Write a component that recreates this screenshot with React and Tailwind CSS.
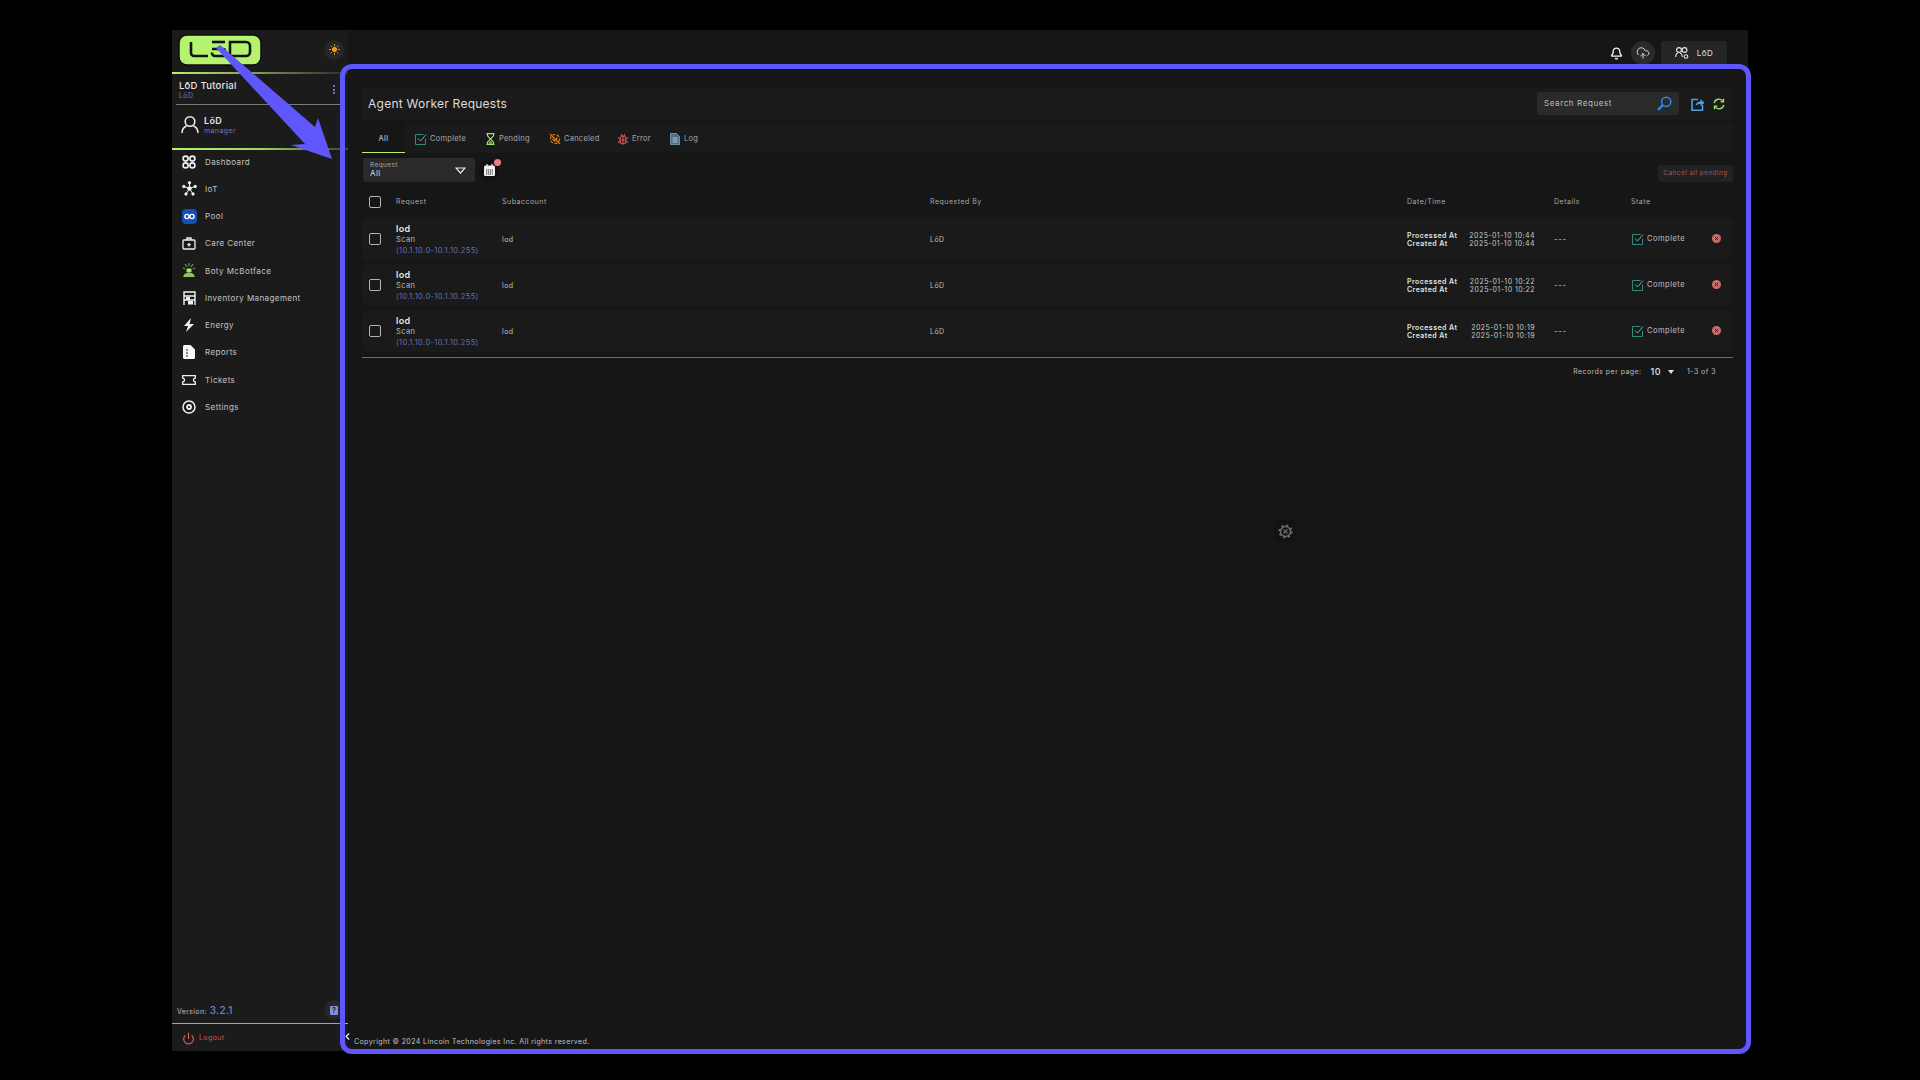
import { Bell, CloudUpload, Power, ChevronLeft } from "lucide-react";

const Logo = () => (
  <svg width="84" height="32" viewBox="0 0 84 32" className="block">
    <rect x="1" y="1" width="82" height="30" rx="8" fill="#b5f36f" stroke="#0d0d0d" strokeWidth="1.5" />
    <g fill="none" stroke="#10140c" strokeWidth="2.6">
      <path d="M13 8v11a3 3 0 0 0 3 3h14" />
      <path d="M34 8h13" />
      <path d="M34 15h11a2 2 0 0 1 2 2v5H37a3 3 0 0 1-3-3.500" />
      <path d="M52 8h16a4 4 0 0 1 4 4v6a4 4 0 0 1-4 4H52z" />
    </g>
  </svg>
);

const DashIcon = () => (
  <svg width="14" height="14" viewBox="0 0 14 14" fill="none" stroke="#f2f2f2" strokeWidth="1.6">
    <circle cx="3.6" cy="3.6" r="2.5" />
    <circle cx="10.4" cy="3.6" r="2.5" />
    <circle cx="3.6" cy="10.4" r="2.5" />
    <circle cx="10.4" cy="10.4" r="2.5" />
  </svg>
);

const IotIcon = () => (
  <svg width="15" height="15" viewBox="0 0 15 15" fill="#f2f2f2" stroke="#f2f2f2" strokeWidth="1">
    <path d="M7.5 7.5 7.5 2M7.5 7.5 2 5.5M7.5 7.5 13 5.5M7.5 7.5 4 13M7.5 7.5 11 13" fill="none" />
    <circle cx="7.5" cy="7.5" r="1.8" />
    <circle cx="7.5" cy="1.8" r="1.2" />
    <circle cx="1.8" cy="5.5" r="1.2" />
    <circle cx="13.2" cy="5.5" r="1.2" />
    <circle cx="4" cy="13" r="1.2" />
    <circle cx="11" cy="13" r="1.2" />
  </svg>
);

const PoolIcon = () => (
  <svg width="15" height="15" viewBox="0 0 15 15" fill="none">
    <rect width="15" height="15" rx="4" fill="#1450b8" />
    <circle cx="5" cy="7.5" r="2.1" stroke="#fff" strokeWidth="1.4" />
    <circle cx="10" cy="7.5" r="2.1" stroke="#fff" strokeWidth="1.4" />
  </svg>
);

const CareIcon = () => (
  <svg width="14" height="13" viewBox="0 0 14 13" fill="none" stroke="#f2f2f2" strokeWidth="1.3">
    <rect x="1" y="3" width="12" height="9" rx="1" />
    <path d="M5 3V1h4v2M7 6v3.4M5.3 7.7h3.4" />
  </svg>
);

const BotyIcon = () => (
  <svg width="14" height="15" viewBox="0 0 14 15" fill="#86c95a">
    <path d="M1 14l1.5-3 2-1h5l2 1 1.5 3z" />
    <rect x="4.5" y="5.5" width="5" height="4" rx="1" fill="#a7e07a" />
    <path d="M3 1l2 3M11 1 9 4M7 0v3M1 5l2 1M13 5l-2 1" stroke="#6fa84c" strokeWidth="1.1" fill="none" />
  </svg>
);

const InventoryIcon = () => (
  <svg width="13" height="14" viewBox="0 0 13 14" fill="none" stroke="#f2f2f2" strokeWidth="1.4">
    <path d="M1 14V1h11v13M1 5h11M1 9h11" />
    <rect x="5" y="10" width="5" height="3.5" fill="#f2f2f2" stroke="none" />
    <rect x="3" y="6" width="4" height="3" fill="#f2f2f2" stroke="none" />
  </svg>
);

const EnergyIcon = () => (
  <svg width="12" height="14" viewBox="0 0 12 14" fill="#f2f2f2">
    <path d="M8 0 1 8h4l-2 6 8-8H6.5z" />
  </svg>
);

const ReportsIcon = () => (
  <svg width="12" height="14" viewBox="0 0 12 14">
    <path d="M1.5 0H7.5L12 4.5V12.5A1.5 1.5 0 0 1 10.5 14H1.5A1.5 1.5 0 0 1 0 12.5V1.5A1.5 1.5 0 0 1 1.5 0z" fill="#f7f7f7" />
    <path d="M3 5h2M3 8h2M3 11h2" stroke="#222" strokeWidth="1" />
  </svg>
);

const TicketIcon = () => (
  <svg width="14" height="10" viewBox="0 0 14 10" fill="none" stroke="#f2f2f2" strokeWidth="1.3">
    <path d="M.7.7h12.6v2.5a1.8 1.8 0 0 0 0 3.6v2.5H.7V6.800a1.8 1.8 0 0 0 0-3.6z" />
  </svg>
);

const SettingsIcon = () => (
  <svg width="14" height="14" viewBox="0 0 14 14" fill="none" stroke="#f2f2f2">
    <circle cx="7" cy="7" r="6" strokeWidth="1.5" />
    <circle cx="7" cy="7" r="2" strokeWidth="1.8" />
  </svg>
);

const navItems = [
  ["Dashboard", <DashIcon />],
  ["IoT", <IotIcon />],
  ["Pool", <PoolIcon />],
  ["Care Center", <CareIcon />],
  ["Boty McBotface", <BotyIcon />],
  ["Inventory Management", <InventoryIcon />],
  ["Energy", <EnergyIcon />],
  ["Reports", <ReportsIcon />],
  ["Tickets", <TicketIcon />],
  ["Settings", <SettingsIcon />],
];

const CheckSquare = () => (
  <svg width="12" height="12" viewBox="0 0 12 12" fill="none" stroke="#2f8a7c" strokeWidth="1">
    <path d="M10.5 5.5v6H.5V1.500h8" />
    <path d="M3 5.5l2.5 2.5L11 1.5" stroke="#5cb8a6" />
  </svg>
);

const Hourglass = () => (
  <svg width="9" height="12" viewBox="0 0 9 12" fill="none" stroke="#9ee06a" strokeWidth="1.2">
    <path d="M.5.6h8M.5 11.4h8M1.5.6v2.2L4.5 6l-3 3.2v2.2M7.5.6v2.2L4.5 6l3 3.2v2.2" />
    <path d="M2.5 10.5 4.5 8l2 2.5z" fill="#9ee06a" stroke="none" />
  </svg>
);

const Canceled = () => (
  <svg width="12" height="12" viewBox="0 0 12 12" fill="none" stroke="#e07b1c" strokeWidth="1.2">
    <circle cx="6" cy="6" r="4.5" strokeDasharray="3 1.5" />
    <path d="M1 1l10 10M3.5 6l2 2 3-3.5" />
  </svg>
);

const Bug = () => (
  <svg width="12" height="12" viewBox="0 0 12 12" fill="none" stroke="#e05252" strokeWidth="1.1">
    <ellipse cx="6" cy="7" rx="3" ry="4" />
    <path d="M6 3v8M3 7h6M4 1l1 2M8 1 7 3M.8 4.500 3 5.500M11.2 4.500 9 5.500M.8 9.500 3 8.500M11.2 9.500 9 8.500" />
  </svg>
);

const LogIcon = () => (
  <svg width="10" height="12" viewBox="0 0 10 12" fill="#4f6f86" stroke="#7fa3bd" strokeWidth="0.8">
    <path d="M.5.5h6l3 3v8H.5z" />
    <path d="M2.5 5h5M2.5 7h5M2.5 9h5" stroke="#c7d8e4" />
  </svg>
);

const tabs = [
  ["Complete", <CheckSquare />, "w-[69px]"],
  ["Pending", <Hourglass />, "w-[65px]"],
  ["Canceled", <Canceled />, "w-[68px]"],
  ["Error", <Bug />, "w-[52px]"],
  ["Log", <LogIcon />, "w-[40px]"],
];

const rowData = [
  ["2025-01-10 10:44", "2025-01-10 10:44"],
  ["2025-01-10 10:22", "2025-01-10 10:22"],
  ["2025-01-10 10:19", "2025-01-10 10:19"],
];

const cols = "grid grid-cols-[34px_106px_428px_477px_147px_77px_76px_26px] items-center";

const Checkbox = () => (
  <div className="ml-[7px] w-[12px] h-[12px] rounded-[2px] border-[1.5px] border-[#b4b4b4]" />
);

const Sidebar = () => (
  <div className="w-[176px] shrink-0 bg-[#1b1b1b] flex flex-col relative">
    {/* logo */}
    <div className="h-[42px] flex items-center justify-between pl-[6px] pr-[4px] pb-[3px]">
      <Logo />
      <div className="w-[20px] h-[20px] rounded-full bg-[#262626] flex items-center justify-center">
        <svg width="11" height="11" viewBox="0 0 11 11" fill="#e99a22" stroke="#e99a22">
          <circle cx="5.5" cy="5.5" r="2.2" />
          <path d="M5.5 0v2M5.5 9v2M0 5.5h2M9 5.5h2M1.6 1.6l1.4 1.4M8 8l1.4 1.4M1.6 9.4 3 8M8 3l1.4-1.4" strokeWidth="0.9" />
        </svg>
      </div>
    </div>
    <div className="h-[2px] w-full bg-gradient-to-r from-[#b5f36f] via-[#7d9a55] to-[#2a2a2a]" />

    {/* account */}
    <div className="h-[30px] pl-[7px] pr-[13px] pt-[1px] flex items-center justify-between">
      <div>
        <div className="text-[9.5px] leading-[12px] font-medium tracking-[0.25px] text-[#e4e4e4]">LōD Tutorial</div>
        <div className="text-[7px] leading-[8px] tracking-[0.4px] text-[#6e78c8]">LōD</div>
      </div>
      <div className="flex flex-col gap-[1.5px]">
        <div className="w-[2px] h-[2px] rounded-full bg-[#8a93e0]" />
        <div className="w-[2px] h-[2px] rounded-full bg-[#8a93e0]" />
        <div className="w-[2px] h-[2px] rounded-full bg-[#8a93e0]" />
      </div>
    </div>
    <div className="ml-[4px] h-[1px] w-[166px] bg-[#7c7c7c]" />

    {/* user */}
    <div className="h-[43px] pl-[9px] pb-[4px] flex items-center gap-[5px]">
      <svg width="18" height="19" viewBox="0 0 18 19" fill="none" stroke="#f2f2f2" strokeWidth="1.5">
        <circle cx="9" cy="6.5" r="4.8" />
        <path d="M1 18c0-4 2-6 4.500-7M17 18c0-4-2-6-4.500-7" />
      </svg>
      <div>
        <div className="text-[9px] leading-[11px] font-semibold tracking-[0.3px] text-[#e4e4e4]">LōD</div>
        <div className="text-[7px] leading-[9px] tracking-[0.4px] text-[#6e78c8]">manager</div>
      </div>
    </div>
    <div className="h-[2px] w-full bg-gradient-to-r from-[#b5f36f] via-[#a3d565] to-[#3a4a2a]" />

    {/* nav */}
    <div className="-mt-[2px] flex flex-col">
      {navItems.map(([label, icon]) => (
        <div key={label} className="h-[27.25px] flex items-center">
          <div className="w-[33px] pl-[8px] pr-[7px] flex justify-center">{icon}</div>
          <span className="text-[8px] tracking-[0.42px] text-[#c4c4c4] whitespace-nowrap">{label}</span>
        </div>
      ))}
    </div>

    {/* bottom */}
    <div className="mt-auto">
      <div className="pl-[5px] pr-[4px] h-[24px] pb-[2px] flex items-center justify-between">
        <div className="flex items-baseline gap-[3px]">
          <span className="text-[7px] tracking-[0.35px] text-[#bdbdbd]">Version:</span>
          <span className="text-[10px] font-medium tracking-[0.3px] text-[#6f7fd6]">3.2.1</span>
        </div>
        <div className="w-[20px] h-[20px] rounded-full bg-[#262626] flex items-center justify-center">
          <div className="w-[8px] h-[9px] rounded-[1px] bg-[#7f8fe0] text-[7px] leading-[9px] text-center font-bold text-[#1b1b1b]">?</div>
        </div>
      </div>
      <div className="h-[1px] bg-[#b0a0a0]" />
      <div className="h-[27px] pl-[10px] pt-[1px] flex items-center gap-[4px]">
        <Power size={13} color="#e25f5f" strokeWidth={2} />
        <span className="text-[7px] tracking-[0.4px] text-[#c45757]">Logout</span>
      </div>
    </div>
  </div>
);

const Row = ({ dates }) => (
  <div className={cols + " h-[42px] rounded-md bg-[#1a1a1a]"}>
    <Checkbox />
    <div className="pt-[1px]">
      <div className="text-[9px] leading-[11px] font-semibold tracking-[0.3px] text-[#e8e8e8]">lod</div>
      <div className="text-[7.5px] leading-[11px] tracking-[0.4px] text-[#bdbdbd]">Scan</div>
      <div className="text-[7.5px] leading-[12px] tracking-[0.38px] text-[#6570b5] whitespace-nowrap">(10.1.10.0-10.1.10.255)</div>
    </div>
    <div className="pt-[2px] text-[7px] tracking-[0.45px] text-[#c0c0c0]">lod</div>
    <div className="pt-[2px] text-[7px] tracking-[0.45px] text-[#c0c0c0]">LōD</div>
    <div className="pt-[2px] w-[128px] flex justify-between text-[7px] leading-[8px] tracking-[0.45px]">
      <div className="font-semibold text-[#e2e2e2]">
        <div>Processed At</div>
        <div>Created At</div>
      </div>
      <div className="text-right text-[#c8c8c8]">
        <div>{dates[0]}</div>
        <div>{dates[1]}</div>
      </div>
    </div>
    <div className="text-[8px] tracking-[0.6px] text-[#c0c0c0]">---</div>
    <div className="pl-[1px] flex items-center gap-[3px]">
      <CheckSquare />
      <span className="text-[7.5px] tracking-[0.5px] text-[#c0c0c0] -mt-[1px]">Complete</span>
    </div>
    <div className="pl-[5px] -mt-[2px]">
      <svg width="9" height="9" viewBox="0 0 9 9">
        <circle cx="4.5" cy="4.5" r="4.5" fill="#cf6b6b" />
        <path d="M2.8 2.8l3.4 3.4M6.2 2.8 2.8 6.2" stroke="#3a1c1c" strokeWidth="1" />
      </svg>
    </div>
  </div>
);

const Main = () => (
  <div className="flex-1 min-w-0 bg-[#161616] flex flex-col pl-[14px] pr-[15px]">
    {/* top bar */}
    <div className="h-[57px] shrink-0 pt-[11px] pr-[6px] flex items-start justify-end">
      <div className="mr-[6px] flex items-center gap-[8px]">
        <Bell size={13} color="#f5f5f5" strokeWidth={2.4} />
        <div className="w-[24px] h-[24px] rounded-full bg-[#2a2a2a] flex items-center justify-center">
          <CloudUpload size={14} color="#d8d8d8" strokeWidth={1.7} />
        </div>
      </div>
      <div className="w-[66px] h-[24px] rounded-[2px] bg-[#252525] flex items-center justify-center gap-[8px]">
        <svg width="14" height="12" viewBox="0 0 14 12" fill="none" stroke="#e8e8e8" strokeWidth="1.1">
          <circle cx="4" cy="3" r="2.4" />
          <path d="M.6 10c0-2.500 1-3.500 2.200-4M7.400 10c0-2.500-1-3.500-2.200-4" />
          <circle cx="9.5" cy="3" r="2.4" />
          <circle cx="11" cy="9.5" r="1.8" />
        </svg>
        <span className="text-[8px] tracking-[0.5px] text-[#e0e0e0]">LōD</span>
      </div>
    </div>

    {/* title */}
    <div className="h-[33px] shrink-0 bg-[#1a1a1a] pl-[6px] flex items-center justify-between">
      <h1 className="text-[12px] tracking-[0.25px] text-[#dcdcdc]">Agent Worker Requests</h1>
      <div className="flex items-center">
        <div className="w-[142px] h-[23px] rounded-[2px] bg-[#2a2a2a] pl-[7px] pr-[7px] flex items-center justify-between">
          <span className="-mt-[2px] text-[8px] tracking-[0.6px] text-[#bdbdbd]">Search Request</span>
          <svg width="15" height="15" viewBox="0 0 15 15" fill="none" stroke="#2f86f2" strokeWidth="1.5">
            <circle cx="9.2" cy="5.8" r="4.6" />
            <path d="M5.8 9.2 1 14" strokeWidth="2.4" />
          </svg>
        </div>
        <svg className="ml-[12px]" width="14" height="14" viewBox="0 0 14 14" fill="none" stroke="#4a9fe8" strokeWidth="1.6">
          <path d="M7 2.5H1v10.7h10.500V8" />
          <path d="M4.5 9c.3-3 2.5-4.500 5-4.500V2l4 3.700-4 3.500V7c-2 0-3.700.5-5 2z" fill="#4a9fe8" stroke="none" />
        </svg>
        <svg className="ml-[8px] mr-[8px]" width="12" height="12" viewBox="0 0 12 12" fill="none" stroke="#9fe06a" strokeWidth="1.3">
          <path d="M1.2 5A4.8 4.8 0 0 1 10 3.5M10.8 7A4.8 4.8 0 0 1 2 8.5" />
          <path d="M10.5.8v3H7.5M1.5 11.2v-3h3" />
        </svg>
      </div>
    </div>

    {/* tabs */}
    <div className="mt-[4px] h-[29px] shrink-0 flex bg-[#1a1a1a]">
      <div className="w-[43px] bg-[#161616] border-b-[1.5px] border-[#b5f36f] pt-[1px] flex items-center justify-center">
        <span className="text-[7.5px] tracking-[0.4px] text-[#d8d8d8]">All</span>
      </div>
      <div className="flex items-center pl-[10px]">
        {tabs.map(([label, icon, w]) => (
          <div key={label} className={w + " flex items-center gap-[3px]"}>
            <span className="w-[12px] flex justify-center">{icon}</span>
            <span className="pt-[1px] text-[7.5px] tracking-[0.25px] text-[#a8a8a8]">{label}</span>
          </div>
        ))}
      </div>
    </div>

    {/* filters */}
    <div className="mt-[5px] h-[24px] shrink-0 flex items-center">
      <div className="ml-[1px] w-[112px] h-[24px] rounded-[2px] bg-[#2a2a2a] pl-[7px] pr-[9px] flex items-center justify-between">
        <div>
          <div className="text-[6.5px] leading-[7px] tracking-[0.4px] text-[#a8a8a8]">Request</div>
          <div className="text-[8px] leading-[9px] tracking-[0.4px] text-[#dcdcdc]">All</div>
        </div>
        <svg width="11" height="7" viewBox="0 0 11 7" fill="none" stroke="#e8e8e8" strokeWidth="1.2">
          <path d="M1 1h9L5.5 6z" />
        </svg>
      </div>
      <div className="relative ml-[4px] w-[20px] h-[20px] rounded-full bg-[#111] flex items-center justify-center">
        <svg width="11" height="12" viewBox="0 0 11 12">
          <rect y="1.5" width="11" height="10.5" rx="1.5" fill="#f2f2f2" />
          <path d="M3 0v3M8 0v3" stroke="#f2f2f2" strokeWidth="1.2" />
          <path d="M2 6h7M2 8h7M2 10h7" stroke="#222" strokeWidth="1" strokeDasharray="1.2 .7" />
        </svg>
        <div className="absolute -top-[1px] -right-[2px] w-[7px] h-[7px] rounded-full bg-[#f07a7a]" />
      </div>
      <div className="ml-auto mt-[7px] w-[75px] h-[17px] rounded-[2px] bg-[#222] flex items-center justify-center">
        <span className="text-[6.5px] tracking-[0.42px] text-[#a05858] whitespace-nowrap">Cancel all pending</span>
      </div>
    </div>

    {/* table */}
    <div className={cols + " mt-[9px] h-[22px] shrink-0 text-[7px] tracking-[0.5px] text-[#a8a8a8]"}>
      <Checkbox />
      <div>Request</div>
      <div>Subaccount</div>
      <div>Requested By</div>
      <div>Date/Time</div>
      <div>Details</div>
      <div>State</div>
      <div />
    </div>
    <div className="mt-[5px] flex flex-col gap-[4px]">
      {rowData.map((dates, i) => (
        <Row key={i} dates={dates} />
      ))}
    </div>
    <div className="mt-[5px] h-[1px] bg-[#6f6f6f]" />

    {/* pagination */}
    <div className="h-[28px] shrink-0 flex items-center justify-end pr-[17px] text-[7px] tracking-[0.45px] text-[#bdbdbd]">
      <span>Records per page:</span>
      <span className="ml-[9px] text-[9px] font-medium text-[#e4e4e4]">10</span>
      <svg className="ml-[7px]" width="6" height="4" viewBox="0 0 6 4" fill="#e0e0e0">
        <path d="M0 0h6L3 4z" />
      </svg>
      <span className="ml-[13px]">1-3 of 3</span>
    </div>

    {/* loading gear */}
    <div className="flex-1 min-h-0 relative">
      <div className="absolute left-[912px] top-[134px] w-[22px] h-[22px] rounded-md bg-[#131313] flex items-center justify-center">
        <svg width="15" height="15" viewBox="0 0 15 15" fill="none" stroke="#6e6e6e">
          <circle cx="7.5" cy="7.5" r="5" strokeWidth="1.5" />
          <circle cx="7.5" cy="7.5" r="6.3" strokeWidth="1.5" strokeDasharray="2 2.95" />
          <path d="M5.5 5.5l4 4M9.5 5.5l-4 4" strokeWidth="1.2" />
        </svg>
      </div>
    </div>

    {/* footer */}
    <div className="h-[14px] shrink-0 -ml-[8px] text-[7px] tracking-[0.4px] text-[#c4c4c4] whitespace-nowrap">
      Copyright © 2024 Lincoin Technologies Inc. All rights reserved.
    </div>
  </div>
);

export default function App() {
  return (
    <div className="font-['Inter','Liberation_Sans',sans-serif] relative h-screen w-full overflow-hidden bg-black px-[172px] pt-[30px]">
      <div className="relative flex h-[1021px]">
        <Sidebar />
        <Main />
        <div className="absolute left-[170px] top-[1001px]">
          <ChevronLeft size={11} color="#f2f2f2" strokeWidth={2.5} />
        </div>
      </div>

      {/* tutorial highlight frame */}
      <div className="absolute left-[340px] top-[64px] w-[1411px] h-[990px] rounded-[12px] border-[5px] border-[#5f57fb] pointer-events-none" />
      <svg className="absolute left-[215px] top-[40px] pointer-events-none" width="125" height="125" viewBox="0 0 125 125">
        <path d="M1 8 L5 5 L100 87 L103 78 L117 119 L76 105 L90 104 Z" fill="#5f57fb" />
      </svg>
    </div>
  );
}
